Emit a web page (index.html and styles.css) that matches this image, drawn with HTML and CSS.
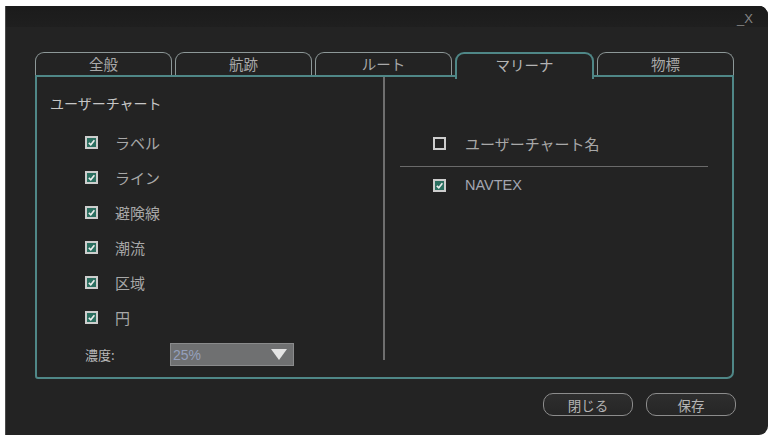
FILE: index.html
```html
<!DOCTYPE html>
<html lang="ja">
<head>
    <meta charset="UTF-8">
    <meta name="viewport" content="width=device-width, initial-scale=1.0">
    <title>ユーザーチャート</title>
    <link rel="stylesheet" href="styles.css">
</head>
<body>

<div class="window">
    <!-- Title bar -->
    <div class="titlebar">
        <span class="win-ctrl">_</span>
        <span class="win-ctrl">X</span>
    </div>

    <!-- Tabs -->
    <div class="tabs">
        <div class="tab">全般</div>
        <div class="tab">航跡</div>
        <div class="tab">ルート</div>
        <div class="tab active">マリーナ</div>
        <div class="tab">物標</div>
    </div>

    <div class="panel">
        <!-- Left column -->
        <div class="col-left">
            <div class="heading">ユーザーチャート</div>
            <div class="check-list">
                <div class="check-row"><span class="box checked"><svg viewBox="0 0 10 10"><path d="M2 5.5 L4.2 7.6 L8.2 2.6" /></svg></span><span class="label">ラベル</span></div>
                <div class="check-row"><span class="box checked"><svg viewBox="0 0 10 10"><path d="M2 5.5 L4.2 7.6 L8.2 2.6" /></svg></span><span class="label">ライン</span></div>
                <div class="check-row"><span class="box checked"><svg viewBox="0 0 10 10"><path d="M2 5.5 L4.2 7.6 L8.2 2.6" /></svg></span><span class="label">避険線</span></div>
                <div class="check-row"><span class="box checked"><svg viewBox="0 0 10 10"><path d="M2 5.5 L4.2 7.6 L8.2 2.6" /></svg></span><span class="label">潮流</span></div>
                <div class="check-row"><span class="box checked"><svg viewBox="0 0 10 10"><path d="M2 5.5 L4.2 7.6 L8.2 2.6" /></svg></span><span class="label">区域</span></div>
                <div class="check-row"><span class="box checked"><svg viewBox="0 0 10 10"><path d="M2 5.5 L4.2 7.6 L8.2 2.6" /></svg></span><span class="label">円</span></div>
            </div>
            <div class="density">
                <span class="density-label">濃度:</span>
                <div class="select">
                    <span class="select-value">25%</span>
                    <svg class="select-arrow" viewBox="0 0 16 11"><path d="M0 0 H16 L8 11 Z" /></svg>
                </div>
            </div>
        </div>

        <!-- Right column -->
        <div class="col-right">
            <div class="check-row"><span class="box"></span><span class="label">ユーザーチャート名</span></div>
            <div class="separator"></div>
            <div class="check-row"><span class="box checked"><svg viewBox="0 0 10 10"><path d="M2 5.5 L4.2 7.6 L8.2 2.6" /></svg></span><span class="label latin">NAVTEX</span></div>
        </div>
    </div>

    <!-- Footer buttons -->
    <div class="buttons">
        <button type="button" class="btn">閉じる</button>
        <button type="button" class="btn">保存</button>
    </div>
</div>

</body>
</html>
```

FILE: styles.css
```css
body {
    margin: 0;
    background-color: #ffffff;
    font-family: 'Noto Sans CJK JP', 'Noto Sans', sans-serif;
}

.window {
    margin: 6px 5px 0 5px;
    height: 429px;
    background-color: #232323;
    border-left: 1px solid #4a4a4a;
    border-radius: 0 9px 9px 0;
    box-sizing: border-box;
    overflow: hidden;
}

.titlebar {
    height: 21px;
    background: linear-gradient(#1b1b1b, #1f1f1f);
    display: flex;
    justify-content: flex-end;
    align-items: flex-end;
    padding-right: 15px;
    gap: 0;
}

.win-ctrl {
    font-family: 'Liberation Sans', sans-serif;
    font-size: 13px;
    color: #858585;
    line-height: 16px;
}

/* Tabs */
.tabs {
    display: flex;
    gap: 3px;
    margin: 25px 34px 0 29px;
    height: 23px;
}

.tab {
    flex: 1;
    border: 1.5px solid #8d9898;
    border-bottom: none;
    border-radius: 9px 9px 0 0;
    color: #a9a9a9;
    font-size: 14.5px;
    text-align: center;
    line-height: 21px;
}

.tab.active {
    position: relative;
    z-index: 1;
    height: 25px;
    border: 2px solid #4f8787;
    border-bottom: none;
    background-color: #232323;
    color: #b4b4b4;
}

/* Panel */
.panel {
    margin: 0 34px 0 29px;
    height: 304px;
    border: 2px solid #4f8787;
    border-radius: 0 0 7px 3px;
    box-sizing: border-box;
    display: flex;
}

.col-left {
    width: 348px;
    padding: 16px 0 0 13px;
    box-sizing: border-box;
    border-right: 2px solid #6e6e6e;
    margin-bottom: 17px;
}

.heading {
    font-size: 14px;
    line-height: 20px;
    color: #c6c6c6;
}

.check-list {
    margin: 12px 0 0 35px;
}

.check-row {
    display: flex;
    align-items: center;
    height: 35px;
}

.box {
    width: 13px;
    height: 13px;
    border: 2px solid #cdcdcd;
    box-sizing: border-box;
    margin-right: 17px;
    display: flex;
}

.box.checked {
    background-color: #2b6f60;
}

.box svg {
    width: 100%;
    height: 100%;
    fill: none;
    stroke: #ececec;
    stroke-width: 1.8;
}

.label {
    font-size: 15px;
    color: #a8a8a8;
}

.label.latin {
    font-family: 'Liberation Sans', sans-serif;
    font-size: 14.5px;
    color: #a4a6b2;
}

.density {
    display: flex;
    align-items: center;
    margin: 8px 0 0 35px;
}

.density-label {
    width: 85px;
    font-size: 13px;
    color: #b8b8b8;
}

.select {
    width: 124px;
    height: 23px;
    box-sizing: border-box;
    background-color: #6f7071;
    border: 1px solid #8a8b8c;
    display: flex;
    align-items: center;
    justify-content: space-between;
    padding: 0 6px 0 2px;
}

.select-value {
    font-family: 'Liberation Sans', sans-serif;
    font-size: 14px;
    color: #95a0bd;
}

.select-arrow {
    width: 16px;
    height: 11px;
    fill: #e4e4e4;
}

.col-right {
    flex: 1;
    padding: 48px 0 0 15px;
}

.col-right .check-row {
    height: 36px;
    padding-left: 33px;
}

.col-right .box {
    margin-right: 19px;
}

.separator {
    width: 308px;
    height: 1px;
    background-color: #6a6a6a;
    margin-top: 5px;
}

/* Footer buttons */
.buttons {
    display: flex;
    justify-content: flex-end;
    gap: 13px;
    margin-top: 14px;
    padding-right: 32px;
}

.btn {
    width: 90px;
    height: 23px;
    border: 1.5px solid #8c8c8c;
    border-radius: 10px;
    background: linear-gradient(#2e2e2e, #262626);
    color: #b4b4b4;
    font-family: 'Noto Sans CJK JP', sans-serif;
    font-size: 13.5px;
    line-height: 18px;
    padding: 0;
    cursor: pointer;
}
```
